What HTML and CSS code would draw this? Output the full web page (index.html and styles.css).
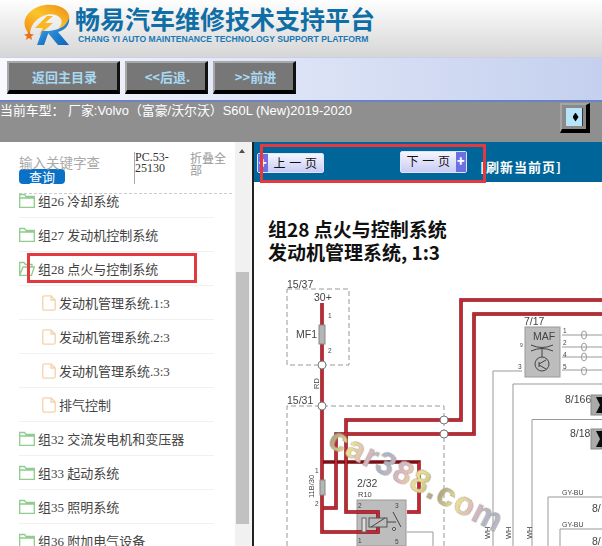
FILE: index.html
```html
<!DOCTYPE html>
<html lang="zh-CN">
<head>
  <meta charset="UTF-8">
  <meta name="viewport" content="width=device-width, initial-scale=1.0">
  <title>畅易汽车维修技术支持平台</title>
  <link rel="stylesheet" href="styles.css">
</head>
<body>
  <header class="top">
    <svg class="logo" width="50" height="44" viewBox="0 0 50 44">
      <defs>
        <linearGradient id="ring" x1="0" y1="1" x2="1" y2="0">
          <stop offset="0" stop-color="#f08a10"/>
          <stop offset="0.5" stop-color="#fbc52c"/>
          <stop offset="1" stop-color="#ee8a14"/>
        </linearGradient>
        <linearGradient id="rblue" x1="0" y1="0" x2="1" y2="1">
          <stop offset="0" stop-color="#3fa4e8"/>
          <stop offset="1" stop-color="#0a62b8"/>
        </linearGradient>
      </defs>
      <path fill="url(#ring)" d="M8 32C0 24 1 14 9 8C17 1 30 0 39 4C47 8 49 14 46 20C43 25 39 27 35 28C38 24 41 20 39 16C36 11 28 10 21 13C12 17 8 24 8 32Z"/>
      <path fill="#f9b523" d="M25 13L13 25L21 25L17 32L31 20L23 20L31 13Z"/>
      <path fill="#e8701a" d="M7 28L8.500 31L12 31.500L9.300 33.500L10 37L7 35L4 37L4.800 33.500L2 31.500L5.500 31Z"/>
      <path fill="url(#rblue)" d="M15 42L20 28L27 28L22 42Z"/>
      <path fill="url(#rblue)" d="M24 28C30 28 38 26 42 23C44 21 46 18 47 15C48 21 44 27 36 29L47 42L36 42L26 30Z"/>
    </svg>
    <div class="brand">
      <div class="brand-cn">畅易汽车维修技术支持平台</div>
      <div class="brand-en">CHANG YI AUTO MAINTENANCE TECHNOLOGY SUPPORT PLATFORM</div>
    </div>
  </header>

  <nav class="nav">
    <a class="nav-btn nav-home">返回主目录</a>
    <a class="nav-btn nav-step">&lt;&lt;后退.</a>
    <a class="nav-btn nav-step">&gt;&gt;前进</a>
  </nav>

  <div class="info">
    <span class="car">当前车型： 厂家:Volvo（富豪/沃尔沃）S60L (New)2019-2020</span>
    <span class="toggle"><span class="toggle-inner"><span class="diamond"></span></span></span>
  </div>

  <main class="main">
    <aside class="side">
      <div class="side-scroll">
        <div class="side-head">
          <div class="search">
            <div class="search-hint">输入关键字查</div>
            <div class="search-btn">查询</div>
          </div>
          <div class="pc-code">PC.53-<br>25130</div>
          <div class="fold">折叠全部</div>
        </div>
        <ul class="tree">
          <li><svg class="ico"><use href="#folder"/></svg>组26 冷却系统</li>
          <li><svg class="ico"><use href="#folder"/></svg>组27 发动机控制系统</li>
          <li class="current"><svg class="ico"><use href="#folder-open"/></svg>组28 点火与控制系统</li>
          <li class="leaf"><svg class="ico-file"><use href="#file"/></svg>发动机管理系统.1:3</li>
          <li class="leaf"><svg class="ico-file"><use href="#file"/></svg>发动机管理系统.2:3</li>
          <li class="leaf"><svg class="ico-file"><use href="#file"/></svg>发动机管理系统.3:3</li>
          <li class="leaf"><svg class="ico-file"><use href="#file"/></svg>排气控制</li>
          <li><svg class="ico"><use href="#folder"/></svg>组32 交流发电机和变压器</li>
          <li><svg class="ico"><use href="#folder"/></svg>组33 起动系统</li>
          <li><svg class="ico"><use href="#folder"/></svg>组35 照明系统</li>
          <li><svg class="ico"><use href="#folder"/></svg>组36 附加电气设备</li>
        </ul>
      </div>
      <div class="scrollbar">
        <span class="arrow-up"></span>
        <span class="thumb"></span>
      </div>
    </aside>

    <section class="doc">
      <div class="doc-bar">
        <a class="page-btn prev"><span class="page-arrow">✚</span><span class="page-label">上 一 页</span></a>
        <a class="page-btn next"><span class="page-label">下 一 页</span><span class="page-arrow">✚</span></a>
        <a class="refresh">[刷新当前页]</a>
        <span class="mark mark-pager"></span>
      </div>
      <h1 class="doc-title">组28 点火与控制系统<br>发动机管理系统, 1:3</h1>

      <svg class="diagram" viewBox="254 275 348 271" width="348" height="271">
        <defs>
          <filter id="soft"><feGaussianBlur stdDeviation="0.35"/></filter>
          <filter id="softer"><feGaussianBlur stdDeviation="0.6"/></filter>
          <linearGradient id="wm" gradientUnits="userSpaceOnUse" x1="0" y1="0" x2="60" y2="0" spreadMethod="reflect">
            <stop offset="0" stop-color="#a89a7c"/>
            <stop offset="0.35" stop-color="#ece48c"/>
            <stop offset="0.65" stop-color="#e2b8bc"/>
            <stop offset="1" stop-color="#aab4c8"/>
          </linearGradient>
        </defs>
        <g filter="url(#soft)">
          <g fill="none" stroke="#999" stroke-width="1" stroke-dasharray="5 3">
            <path d="M287 289H349V365H287Z"/>
            <path d="M287 546V406H444V546"/>
          </g>

          <rect x="357" y="500" width="49" height="46" fill="#bdbdbd" stroke="#999"/>
          <rect x="525" y="327" width="35" height="50" fill="#bdbdbd" stroke="#999"/>

          <g fill="none" stroke="#7a0c14" stroke-width="3.500">
            <path d="M322 303V532H378V512H346V420H461V300H602"/>
            <path d="M322 508H336V434H474V314H602"/>
            <path d="M322 462H419V512H407"/>
          </g>
          <g fill="none" stroke="#cc2430" stroke-width="2">
            <path d="M322 303V532H378V512H346V420H461V300H602"/>
            <path d="M322 508H336V434H474V314H602"/>
            <path d="M419 462V512H407"/>
          </g>

          <g fill="none" stroke="#999" stroke-width="1">
            <path d="M522 371H493V546"/>
            <path d="M602 384H513V546"/>
            <path d="M602 419.500H532V546"/>
            <path d="M602 497H548V546"/>
            <path d="M602 529H560V546"/>
            <path d="M407 532H433V546"/>
            <path d="M562 335H602M562 347H602M562 357H602M562 370H602"/>
            <ellipse cx="584" cy="335" rx="2.500" ry="4"/>
            <ellipse cx="584" cy="347" rx="2.500" ry="4"/>
            <ellipse cx="584" cy="357" rx="2.500" ry="4"/>
            <ellipse cx="584" cy="371" rx="2.500" ry="4"/>
          </g>

          <g fill="#fff" stroke="#777" stroke-width="1">
            <circle cx="322" cy="365" r="4"/>
            <circle cx="322" cy="406" r="4"/>
            <circle cx="444" cy="420" r="4"/>
            <circle cx="444" cy="434" r="4"/>
          </g>

          <rect x="319" y="325" width="6" height="19" fill="#b5b5b5" stroke="#888"/>
          <rect x="320" y="480" width="5" height="15" fill="#b5b5b5" stroke="#888"/>
          <rect x="362" y="518" width="4" height="14" fill="#ddd" stroke="#666"/>
          <rect x="369" y="518" width="18" height="9" fill="#bdbdbd" stroke="#555"/>
          <path d="M371 527L385 518M393 512L401 527M387 522H396" fill="none" stroke="#444"/>
          <circle cx="394" cy="529" r="1.500" fill="#fff" stroke="#444"/>

          <g fill="none" stroke="#444">
            <circle cx="542" cy="364" r="7"/>
            <path d="M531 345Q542 350 553 345M531 351Q542 346 553 351M542 348V357M539 362V367M539 364L546 360M539 365L546 369"/>
          </g>

          <g fill="#444" font-family="Liberation Sans, sans-serif" font-size="10.500">
            <text x="287" y="288">15/37</text>
            <text x="314" y="301">30+</text>
            <text x="296" y="338">MF1</text>
            <text x="287" y="404">15/31</text>
            <text x="357" y="487" font-size="10.500">2/32</text>
            <text x="358" y="497" font-size="7.500">R10</text>
            <text x="524" y="325">7/17</text>
            <text x="533" y="340">MAF</text>
            <text x="565" y="403">8/166</text>
            <text x="570" y="437">8/18</text>
            <text x="592" y="512">8/</text>
            <text x="592" y="545">8/</text>
            <text x="562" y="495" font-size="7">GY-BU</text>
            <text x="562" y="527" font-size="7">GY-BU</text>
            <g font-size="6.500">
              <text x="328" y="318">1</text>
              <text x="328" y="353">2</text>
              <text x="315" y="473">1</text>
              <text x="315" y="506">2</text>
              <text x="358" y="508">2</text>
              <text x="395" y="508">3</text>
              <text x="358" y="543">1</text>
              <text x="395" y="544">5</text>
              <text x="518" y="369">3</text>
              <text x="563" y="333">1</text>
              <text x="563" y="345">2</text>
              <text x="563" y="357">4</text>
              <text x="563" y="369">5</text>
              <text x="520" y="347" font-size="5">9</text>
            </g>
            <g font-size="7.500">
              <text transform="translate(319 389) rotate(-90)">RD</text>
              <text transform="translate(314 498) rotate(-90)">11B/30</text>
              <text transform="translate(490 539) rotate(-90)">WH</text>
              <text transform="translate(511 539) rotate(-90)">WH</text>
              <text transform="translate(532 539) rotate(-90)">WH</text>
            </g>
          </g>

          <rect x="591" y="395" width="11" height="20" fill="#aaa" stroke="#888"/>
          <path d="M596 397H602V413H596L600 405Z" fill="#111"/>
          <rect x="591" y="429" width="11" height="20" fill="#aaa" stroke="#888"/>
          <path d="M596 431H602V447H596L600 439Z" fill="#111"/>
        </g>

        <g transform="translate(326 446) rotate(27)" filter="url(#softer)">
          <text class="watermark" fill="url(#wm)" stroke="#96968c" stroke-width="0.400">car388.com</text>
        </g>
      </svg>
    </section>
  </main>

  <span class="mark mark-tree"></span>

  <svg class="sprites" width="0" height="0">
    <symbol id="folder" viewBox="0 0 16 15">
      <path d="M.7 14.300V1.500H5.500L7 3.500H15.300V14.300ZM.7 5H15.300" fill="none" stroke="#8fcc8f" stroke-width="1.300"/>
    </symbol>
    <symbol id="folder-open" viewBox="0 0 16 15">
      <path d="M.7 14.300V1.500H5L6.500 3.500H13V6M.7 14.300H12.500L15.300 6H4L.7 14.300Z" fill="none" stroke="#8fcc8f" stroke-width="1.300"/>
    </symbol>
    <symbol id="file" viewBox="0 0 14 16">
      <path d="M2.500.8H9L13.200 5V13.500Q13.200 15.200 11.500 15.200H2.500Q.8 15.200.8 13.500V2.500Q.8.8 2.500.8ZM9 .8V5H13.200" fill="none" stroke="#f6d2aa" stroke-width="1.300"/>
    </symbol>
  </svg>
</body>
</html>
```

FILE: styles.css
```css
html, body {
  margin: 0;
  padding: 0;
  height: 546px;
  overflow: hidden;
}

body {
  position: relative;
  font-family: "Liberation Serif", "Noto Sans CJK SC", serif;
  background-color: white;
}

/* header */
.top {
  height: 57px;
  box-sizing: border-box;
  padding: 3px 0 0 22px;
  display: flex;
  gap: 3px;
  background: linear-gradient(to bottom, #fefefe, #d6d6d6);
}

.logo {
  flex: none;
}

.brand-cn {
  font-family: "Noto Sans CJK SC", sans-serif;
  font-weight: bold;
  font-size: 25px;
  line-height: 30px;
  color: #0f6ea6;
}

.brand-en {
  font-family: "Liberation Sans", sans-serif;
  font-weight: bold;
  font-size: 8.600px;
  line-height: 12px;
  margin-left: 3px;
  color: #1a78b4;
  white-space: nowrap;
}

/* nav */
.nav {
  height: 45px;
  box-sizing: border-box;
  padding: 3px 0 0 7px;
  display: flex;
  gap: 5px;
  align-items: flex-start;
  background: linear-gradient(to right, #f8f9fe, #dfe5f7 45%, #c4d0ee);
  border-top: 1px solid #c9cfe8;
  border-bottom: 2px solid #6a82c6;
}

.nav-btn {
  height: 33px;
  box-sizing: border-box;
  display: flex;
  align-items: center;
  justify-content: center;
  padding-left: 3px;
  background-color: #777;
  border-style: solid;
  border-width: 2px 3px 4px 2px;
  border-color: #a8a8a8 #111 #000 #a8a8a8;
  color: #a9d8f2;
  font-family: "Noto Sans CJK SC", sans-serif;
  font-weight: bold;
  font-size: 13px;
}

.nav-home {
  width: 113px;
}

.nav-step {
  width: 83px;
}

/* car info */
.info {
  height: 40px;
  display: flex;
  justify-content: space-between;
  align-items: flex-start;
  padding-right: 12px;
  background-color: #8f8f8f;
}

.car {
  font-family: "Liberation Sans", "Noto Sans CJK SC", sans-serif;
  font-size: 12.900px;
  line-height: 17px;
  color: white;
  white-space: nowrap;
}

.toggle {
  width: 30px;
  height: 30px;
  margin-top: 1px;
  box-sizing: border-box;
  display: flex;
  align-items: center;
  justify-content: center;
  background-color: #8a8a8a;
  border-style: solid;
  border-width: 2px 4px 4px 2px;
  border-color: #a5a5a5 #000 #000 #a5a5a5;
}

.toggle-inner {
  width: 17px;
  height: 18px;
  box-sizing: border-box;
  display: flex;
  align-items: center;
  justify-content: flex-end;
  padding-right: 3px;
  background-color: #b6e4fb;
  border-right: 1px solid #333;
}

.diamond {
  width: 6px;
  height: 9px;
  background-color: black;
  clip-path: polygon(50% 0, 100% 50%, 50% 100%, 0 50%);
}

/* main */
.main {
  height: 404px;
  display: flex;
}

.side {
  width: 252px;
  display: flex;
  border-right: 2px solid #222;
  box-sizing: content-box;
  flex: none;
  background-color: #f4f4f4;
}

.side-scroll {
  width: 235px;
  flex: none;
  background-color: white;
  overflow: hidden;
}

.side-head {
  height: 52px;
  margin-left: 19px;
  margin-right: 3px;
  box-sizing: border-box;
  border-bottom: 1px dashed #ccc;
  display: flex;
  align-items: flex-start;
  padding-top: 10px;
}

.search {
  width: 115px;
  flex: none;
  font-family: "Noto Sans CJK SC", sans-serif;
}

.search-hint {
  font-size: 13.500px;
  line-height: 13px;
  margin-top: 4px;
  color: #aaa;
}

.search-btn {
  width: 46px;
  height: 15px;
  border-radius: 4px;
  background-color: #0b71c4;
  color: white;
  font-size: 13px;
  line-height: 15px;
  text-align: center;
}

.pc-code {
  width: 56px;
  height: 32px;
  flex: none;
  box-sizing: border-box;
  border-left: 1px solid #aaa;
  font-size: 12px;
  line-height: 11px;
  color: #333;
}

.fold {
  width: 37px;
  font-family: "Noto Sans CJK SC", sans-serif;
  font-size: 12px;
  line-height: 12px;
  color: #999;
}

.tree {
  list-style: none;
  margin: -10px 0 0 19px;
  padding: 0;
  width: 195px;
}

.tree li {
  height: 34px;
  box-sizing: border-box;
  border-bottom: 1px solid #f1f1f1;
  display: flex;
  align-items: center;
  gap: 3px;
  font-size: 13px;
  color: #444;
  white-space: nowrap;
}

.tree li.leaf {
  padding-left: 23px;
}

.ico {
  width: 16px;
  height: 15px;
  flex: none;
}

.ico-file {
  width: 14px;
  height: 16px;
  flex: none;
}

.scrollbar {
  width: 15px;
  flex: none;
  position: relative;
  background-color: #f1f1f1;
  margin-right: 2px;
}

.arrow-up {
  position: absolute;
  left: 4px;
  top: 7px;
  border-left: 3.500px solid transparent;
  border-right: 3.500px solid transparent;
  border-bottom: 4px solid #505050;
}

.thumb {
  position: absolute;
  left: 1px;
  top: 130px;
  width: 13px;
  height: 252px;
  background-color: #c1c1c1;
}

/* document */
.doc {
  flex: 1;
  min-width: 0;
}

.doc-bar {
  height: 40px;
  position: relative;
  display: flex;
  align-items: flex-start;
  background-color: #006699;
}

.page-btn {
  width: 67px;
  height: 20px;
  box-sizing: border-box;
  display: flex;
  align-items: stretch;
  border: 1px solid #dfe3fb;
  border-radius: 2px;
  background: linear-gradient(to bottom, #f6f6ff, #c9cbf4);
  font-family: "Noto Sans CJK SC", sans-serif;
  font-size: 12px;
  letter-spacing: 0.500px;
  color: #111;
}

.prev {
  margin: 11px 0 0 3px;
}

.next {
  margin: 9px 0 0 76px;
  height: 22px;
}

.page-label {
  flex: 1;
  text-align: center;
  line-height: 18px;
  white-space: nowrap;
}

.page-arrow {
  width: 10px;
  background-color: #6c70e2;
  color: white;
  font-size: 8px;
  line-height: 18px;
  text-align: center;
}

.refresh {
  margin: 16px 0 0 13px;
  font-family: "Noto Sans CJK SC", sans-serif;
  font-weight: bold;
  font-size: 13px;
  line-height: 18px;
  letter-spacing: 1px;
  color: white;
  white-space: nowrap;
}

.doc-title {
  margin: 35px 0 0 14px;
  font-family: "Noto Sans CJK SC", sans-serif;
  font-weight: bold;
  font-size: 19px;
  line-height: 23px;
  color: #111;
}

.diagram {
  display: block;
  margin-top: 12px;
  overflow: hidden;
}

.watermark {
  font-family: "Liberation Sans", sans-serif;
  font-weight: bold;
  font-size: 33px;
  letter-spacing: 1px;
}

/* red marks drawn over the screenshot */
.mark {
  position: absolute;
  box-sizing: border-box;
  border: 3px solid #e23a3f;
}

.mark-pager {
  left: 6px;
  top: 2px;
  width: 226px;
  height: 39px;
}

.mark-tree {
  left: 27px;
  top: 253px;
  width: 170px;
  height: 30px;
}

.sprites {
  position: absolute;
}
```
